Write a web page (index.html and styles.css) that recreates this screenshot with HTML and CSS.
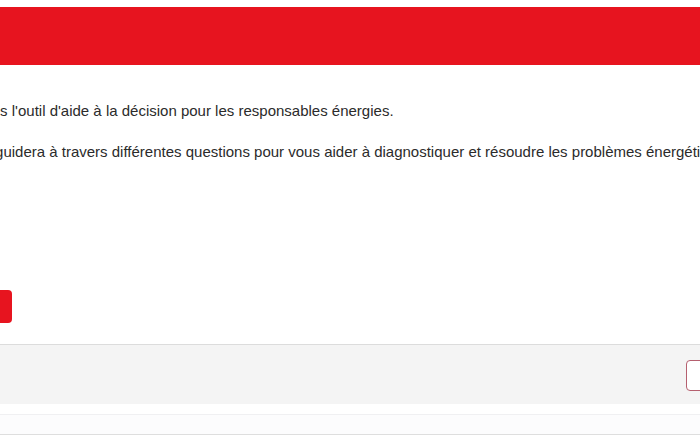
FILE: index.html
```html
<!DOCTYPE html>
<html lang="fr">

<head>
  <meta charset="UTF-8">
  <meta name="viewport" content="width=device-width, initial-scale=1.0">
  <title>Aide à la décision - Responsables énergies</title>
  <link rel="stylesheet" href="styles.css">
</head>

<body>
  <div class="page">
    <div class="card">
      <div class="card-header"></div>

      <div class="card-body">
        <p class="intro">Bienvenue dans l'outil d'aide à la décision pour les responsables énergies.</p>
        <p class="intro">Cet outil vous guidera à travers différentes questions pour vous aider à diagnostiquer et résoudre les problèmes énergétiques.</p>
        <button class="btn btn-primary">Commencer</button>
      </div>

      <div class="card-footer">
        <button class="btn btn-outline">Précédent</button>
      </div>
    </div>

    <!-- carte suivante -->
    <div class="next-card"></div>
  </div>
</body>

</html>
```

FILE: styles.css
```css
* {
  margin: 0;
  padding: 0;
  box-sizing: border-box;
}

body {
  font-family: "Liberation Sans", Arial, Helvetica, sans-serif;
  background: #fff;
  color: #2b2b2b;
}

.page {
  width: 700px;
  height: 441px;
  overflow: hidden;
}

.card {
  margin: 7px -110px 0 -114px;
  background: #fff;
}

.card-header {
  height: 58px;
  background: #e7141f;
}

.card-body {
  padding: 36px 14px 21px;
}

.intro {
  font-size: 15px;
  line-height: 20px;
  white-space: nowrap;
  margin-bottom: 21px;
}

.intro + .intro {
  margin-bottom: 128px;
}

.btn {
  font-family: inherit;
  font-size: 15px;
  border-radius: 4px;
  cursor: pointer;
}

.btn-primary {
  height: 33px;
  padding: 0 15px;
  background: #e7141f;
  color: #fff;
  border: none;
}

.card-footer {
  display: flex;
  justify-content: flex-end;
  height: 60px;
  padding: 15px 16px 0;
  background: #f4f4f4;
  border-top: 1px solid #dcdcdc;
}

.btn-outline {
  height: 31px;
  padding: 0 19px;
  background: #fff;
  color: #b5606f;
  border: 1px solid #b5606f;
}

.next-card {
  height: 21px;
  margin-top: 10px;
  background: #fcfcfd;
  border-top: 1px solid #f0f0f2;
  border-bottom: 1px solid #dedede;
}
```
